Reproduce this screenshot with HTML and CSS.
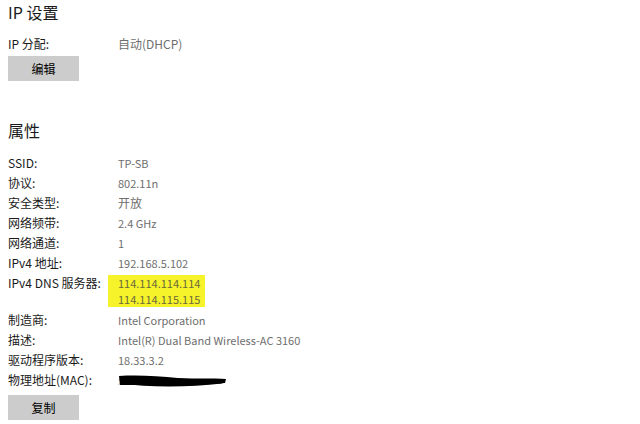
FILE: index.html
```html
<!DOCTYPE html>
<html lang="zh-CN">
  <head>
    <meta charset="UTF-8" />
    <title>IP 设置</title>
    <link rel="stylesheet" href="styles.css">
  </head>
  <body>
    <div class="page">
      <h2 class="section-title">IP 设置</h2>
      <div class="row">
        <div class="label">IP 分配:</div>
        <div class="value cjk">自动(DHCP)</div>
      </div>
      <button class="action">编辑</button>

      <h2 class="section-title props-title">属性</h2>
      <div class="row">
        <div class="label">SSID:</div>
        <div class="value">TP-SB</div>
      </div>
      <div class="row">
        <div class="label">协议:</div>
        <div class="value">802.11n</div>
      </div>
      <div class="row">
        <div class="label">安全类型:</div>
        <div class="value cjk">开放</div>
      </div>
      <div class="row">
        <div class="label">网络频带:</div>
        <div class="value">2.4 GHz</div>
      </div>
      <div class="row">
        <div class="label">网络通道:</div>
        <div class="value">1</div>
      </div>
      <div class="row">
        <div class="label">IPv4 地址:</div>
        <div class="value">192.168.5.102</div>
      </div>
      <div class="row">
        <div class="label">IPv4 DNS 服务器:</div>
        <div class="value multi">
          <span class="mark">114.114.114.114</span>
          <span class="mark">114.114.115.115</span>
        </div>
      </div>
      <div class="row">
        <div class="label">制造商:</div>
        <div class="value">Intel Corporation</div>
      </div>
      <div class="row">
        <div class="label">描述:</div>
        <div class="value">Intel(R) Dual Band Wireless-AC 3160</div>
      </div>
      <div class="row">
        <div class="label">驱动程序版本:</div>
        <div class="value">18.33.3.2</div>
      </div>
      <div class="row">
        <div class="label">物理地址(MAC):</div>
        <div class="value redacted">
          <span class="hidden-mac">xx-xx-xx-xx-xx-xx</span>
          <svg class="scribble" width="110" height="16" viewBox="0 0 110 16">
            <path d="M1 3 C20 2 40 3 60 5 C80 6 95 5 108 6 L107 10 C90 12 70 11 50 12 C30 12 15 12 2 12 Z" fill="#000" />
            <path d="M4 9 C30 13 70 13 104 9" stroke="#000" stroke-width="3" fill="none" />
          </svg>
        </div>
      </div>
      <button class="action copy">复制</button>
    </div>
  </body>
</html>
```

FILE: styles.css
```css
body {
  margin: 0;
  background-color: #ffffff;
  font-family: "Noto Sans CJK SC", sans-serif;
  color: #1a1a1a;
}
.page {
  padding-left: 8px;
}
.section-title {
  margin: 0 0 10px 0;
  font-size: 16px;
  font-weight: normal;
  line-height: 24px;
  color: #1a1a1a;
}
.props-title {
  margin-top: 37px;
  margin-bottom: 11px;
}
.row {
  display: grid;
  grid-template-columns: 110px 1fr;
  font-size: 12px;
  line-height: 20px;
}
.label {
  color: #1a1a1a;
}
.value {
  color: #6e6e6e;
  font-size: 11px;
}
.value.cjk {
  font-size: 12px;
}
.multi {
  display: flex;
  flex-direction: column;
  line-height: 16px;
  padding-top: 2px;
  padding-bottom: 3px;
}
.mark {
  align-self: flex-start;
  background-color: #f6f32a;
  margin-left: -10px;
  padding: 0 5px 0 10px;
  color: #6a6a3a;
}
.redacted {
  position: relative;
}
.hidden-mac {
  color: #b0b0b0;
}
.scribble {
  position: absolute;
  left: 0;
  top: 3px;
}
button.action {
  display: block;
  width: 71px;
  height: 25px;
  margin-top: 2px;
  padding: 0;
  border: none;
  background-color: #cccccc;
  color: #000000;
  font-family: "Noto Sans CJK SC", sans-serif;
  font-size: 12px;
}
button.copy {
  margin-top: 5px;
}
```
